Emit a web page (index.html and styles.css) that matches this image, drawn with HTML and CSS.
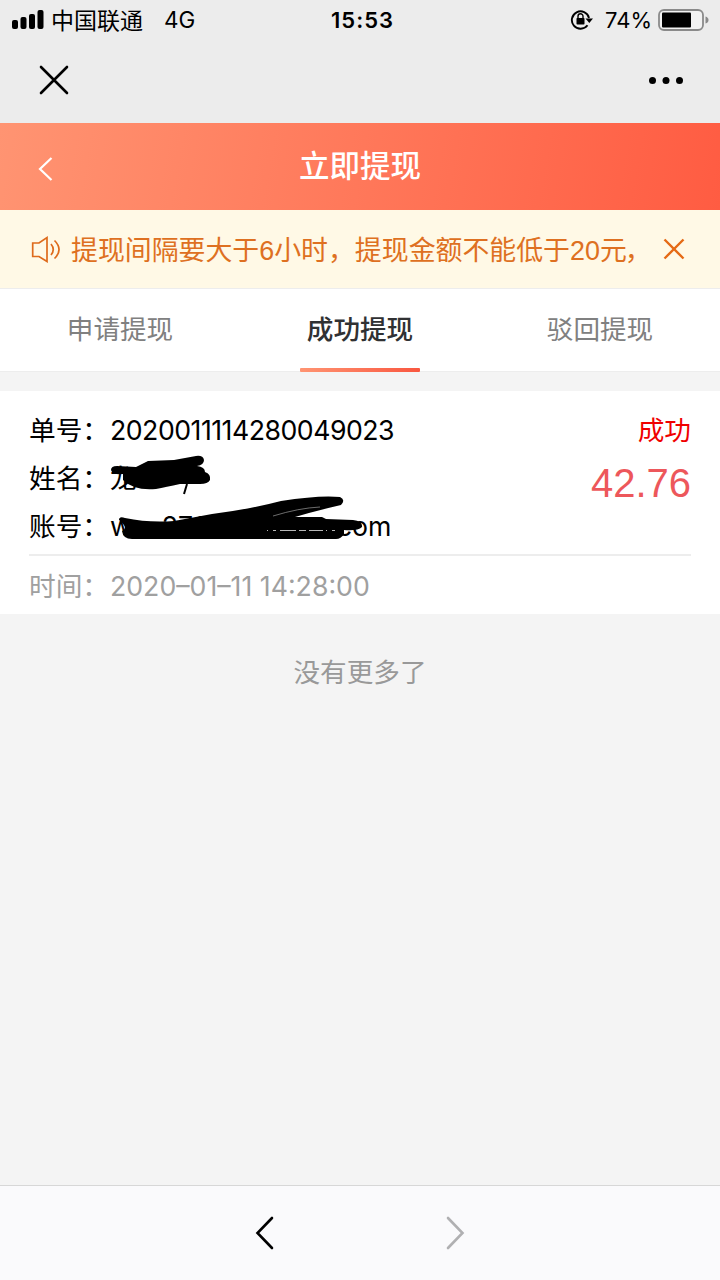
FILE: index.html
```html
<!DOCTYPE html>
<html lang="zh-CN">
<head>
<meta charset="utf-8">
<title>立即提现</title>
<link rel="stylesheet" href="styles.css">
</head>
<body>
<div class="screen">
  <div class="status">
    <div class="status-left">
      <svg class="signal" width="34" height="20" viewBox="0 0 34 20"><rect x="1" y="10" width="6" height="9" rx="2"/><rect x="9.500" y="7" width="6" height="12" rx="2"/><rect x="18" y="4" width="6" height="15" rx="2"/><rect x="26.500" y="0" width="6" height="19" rx="2"/></svg>
      <span class="carrier">中国联通</span><span class="network">4G</span>
    </div>
    <span class="clock">15:53</span>
    <div class="status-right">
      <svg width="24" height="20" viewBox="0 0 24 20"><path d="M17.500 15.300A8.700 8.700 0 1 1 19 8" fill="none" stroke="#000" stroke-width="1.900"/><path d="M15.500 8.500h7.500l-3.700 4.500z"/><rect x="6.500" y="8" width="8" height="6.500" rx=".8"/><path d="M8 9V6.300a2.500 2.500 0 0 1 5 0V9" fill="none" stroke="#000" stroke-width="1.400"/></svg>
      <span class="percent">74%</span>
      <svg width="52" height="22" viewBox="0 0 52 22"><rect x="1" y="1" width="44" height="20" rx="5" fill="#f2f2f2" stroke="#8a8a8a" stroke-width="1.800"/><rect x="4" y="3.500" width="29" height="15" rx="1"/><path d="M47.500 7.500q3 1 3 3.500t-3 3.500z" fill="#8a8a8a"/></svg>
    </div>
  </div>
  <div class="browser-bar">
    <svg width="30" height="30" viewBox="0 0 30 30"><path d="M2 2L28 28M28 2L2 28" fill="none" stroke="#000" stroke-width="2.600" stroke-linecap="round"/></svg>
    <svg width="36" height="8" viewBox="0 0 36 8"><circle cx="3.500" cy="4.500" r="3.500"/><circle cx="17" cy="4.500" r="3.500"/><circle cx="30.500" cy="4.500" r="3.500"/></svg>
  </div>
  <header class="header">
    <svg width="16" height="26" viewBox="0 0 16 26"><path d="M14.500 2L3 13L14.500 24" fill="none" stroke="#fff" stroke-width="2.200"/></svg>
    <h1 class="title">立即提现</h1>
  </header>
  <div class="notice">
    <svg width="30" height="28" viewBox="0 0 30 28"><path d="M1.700 8H8L16 2.500V26.500L8 21.500H1.700ZM20 9q4.500 5.500 0 11M23.500 5.500q9 9 0 18" fill="none" stroke="#de6b1c" stroke-width="1.700"/></svg>
    <p class="notice-text">提现间隔要大于<span class="digit">6</span>小时，提现金额不能低于<span class="digit">20</span><span class="tail">元，</span></p>
    <svg class="dismiss" width="22" height="22" viewBox="0 0 22 22"><path d="M1.500 1.500L20.500 20.500M20.500 1.500L1.500 20.500" fill="none" stroke="#e56a15" stroke-width="2.400"/></svg>
  </div>
  <nav class="tabs">
    <div class="tab">申请提现</div>
    <div class="tab active">成功提现</div>
    <div class="tab">驳回提现</div>
  </nav>
  <section class="record">
    <div class="details">
      <div class="fields">
        <div class="row"><span class="label">单号：</span><span class="value order">2020011114280049023</span></div>
        <div class="row"><span class="label">姓名：</span><span class="value">龙</span></div>
        <div class="row"><span class="label">账号：</span><span class="value account"><span>w</span><span class="middle">272</span><span>com</span></span></div>
      </div>
      <div class="result"><div class="state">成功</div><div class="amount">42.76</div></div>
      <svg class="redaction" width="290" height="100" viewBox="0 0 290 100"><path d="M2 19Q2 15 8 15L27 16L39 10L65 9L87 5Q94 4 95 9Q95 14 88 15Q96 16 96 21Q102 23 101 29Q99 33 91 33H71Q57 36 47 38Q25 40 14 29V23Q3 24 2 19Z"/><path d="M78 33L75 43" fill="none" stroke="#000" stroke-width="2"/><path d="M10 69Q10 65 16 67Q40 72 65 70L103 63Q142 58 172 50Q210 44 231 46Q237 49 232 54Q206 60 186 66H213L217 68L244 69Q254 70 253 76Q249 80 235 79V83Q232 88 227 88H23Q14 88 13 80Q20 77 10 69Z"/><path d="M164 65Q190 57 211 56" fill="none" stroke="#888" stroke-width=".8"/><path d="M158 79.500H228" fill="none" stroke="#ccc" stroke-width=".9" stroke-dasharray="1 5 3 4 16 3 7 3 14 3"/></svg>
    </div>
    <div class="row time"><span class="label">时间：</span><span class="value date">2020–01–11 14:28:00</span></div>
  </section>
  <p class="end">没有更多了</p>
  <footer class="footer">
    <svg width="20" height="34" viewBox="0 0 20 34"><path d="M17 2L2.500 17L17 32" fill="none" stroke="#000" stroke-width="2.600" stroke-linecap="round"/></svg>
    <svg width="20" height="34" viewBox="0 0 20 34"><path d="M3 2L17.500 17L3 32" fill="none" stroke="#b0b0b2" stroke-width="2.600" stroke-linecap="round"/></svg>
  </footer>
</div>
</body>
</html>
```
FILE: styles.css
```css
* { box-sizing: border-box; margin: 0; padding: 0; }
body { font-family: Inter, "Noto Sans CJK SC", sans-serif; color: #000; }
svg { display: block; flex: none; }
.screen { width: 720px; height: 1280px; display: flex; flex-direction: column; background: #f4f4f4; white-space: nowrap; overflow: hidden; }
.status { height: 40px; background: #ececec; display: grid; grid-template-columns: 1fr auto 1fr; align-items: center; padding: 0 11px; font-size: 22px; }
.status-left, .status-right { display: flex; align-items: center; }
.status-right { justify-content: flex-end; margin-right: -1px; }
.carrier { font-size: 23px; margin: -2px 0 0 6px; }
.network { font-size: 22.500px; margin: -1px 0 0 21px; }
.clock { font-size: 22px; font-weight: 600; letter-spacing: 1px; padding-left: 5px; }
.percent { margin: 0 6px 0 11px; font-size: 22px; }
.browser-bar { height: 83px; background: #ececec; display: flex; justify-content: space-between; align-items: center; padding: 0 35px 3px 39px; }
.header { height: 87px; display: grid; grid-template-columns: 80px 1fr 80px; align-items: center; background: linear-gradient(100deg, #ff9472, #ff5c42); color: #fff; }
.header svg { margin: 4px 0 0 37px; }
.title { text-align: center; font-size: 30.500px; font-weight: 500; line-height: 40px; margin-top: -1px; }
.notice { height: 79px; background: #fff9e6; border-bottom: 1px solid #ededed; display: flex; align-items: center; padding: 0 35px 0 31px; color: #de7021; }
.notice-text { font-size: 26.900px; line-height: 40px; margin: 2px 0 0 10px; width: 581px; overflow: hidden; }
.dismiss { margin-left: auto; }
.digit { font-family: "Liberation Sans", sans-serif; }
.tail { letter-spacing: -2px; }
.tabs { height: 83px; background: #fff; border-bottom: 1px solid #ededed; display: flex; margin-bottom: 19px; }
.tab { flex: 1; display: flex; flex-direction: column; align-items: center; justify-content: space-between; padding-top: 20px; font-size: 26.600px; line-height: 40px; color: #808080; }
.tab.active { color: #303133; font-weight: 500; }
.tab.active::after { content: ""; width: 120px; height: 4px; margin-bottom: -1px; border-radius: 1px; background: linear-gradient(90deg, #ff9472, #f95740); }
.record { height: 223px; background: #fff; padding: 15px 29px 0; }
.details { position: relative; height: 150px; border-bottom: 2px solid #ededed; display: flex; justify-content: space-between; }
.row { height: 48px; line-height: 48px; display: flex; font-size: 26.700px; }
.label { width: 81px; flex: none; }
.order { letter-spacing: -.5px; }
.account { display: flex; }
.middle { width: 205px; padding-left: 30px; }
.result { text-align: right; }
.state { font-size: 26.700px; line-height: 48px; color: #f00000; }
.amount { font-family: "Liberation Sans", sans-serif; font-size: 40px; line-height: 58px; color: #ed575b; }
.redaction { position: absolute; left: 80px; top: 45px; }
.time { color: #a0a0a0; height: 60px; line-height: 60px; }
.end { margin-top: 38px; text-align: center; font-size: 26.600px; line-height: 40px; color: #999; }
.footer { margin-top: auto; height: 95px; background: #fafafc; border-top: 1px solid #d7d7d7; display: flex; justify-content: center; align-items: center; gap: 170px; }
```
